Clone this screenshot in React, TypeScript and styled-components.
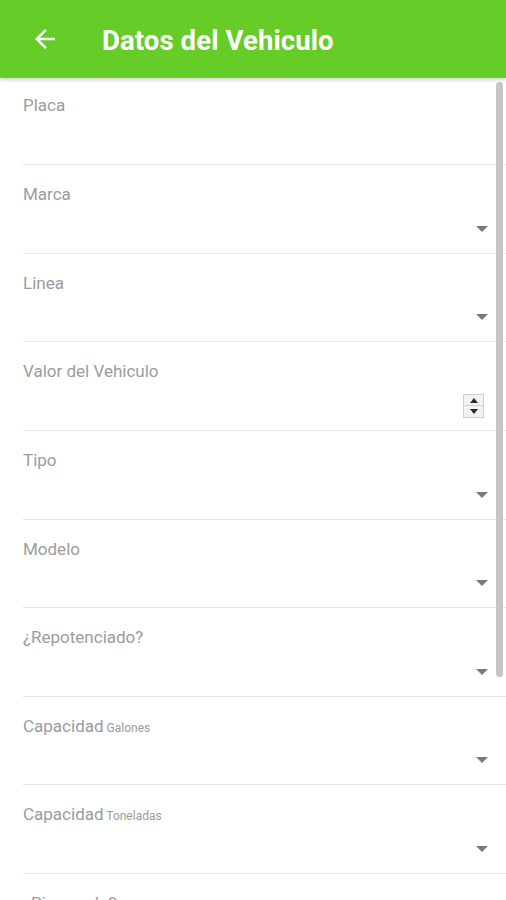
import styled, {createGlobalStyle} from 'styled-components';

const Global = createGlobalStyle`
  html, body {
    margin: 0;
    padding: 0;
    background: #ffffff;
    font-family: Roboto, 'Noto Sans', 'Liberation Sans', sans-serif;
  }
  * { box-sizing: border-box; }
`;

interface Field {
  label: string;
  unit?: string;
  kind: 'text' | 'select' | 'number';
}

const fields: Field[] = [
  {label: 'Placa', kind: 'text'},
  {label: 'Marca', kind: 'select'},
  {label: 'Linea', kind: 'select'},
  {label: 'Valor del Vehiculo', kind: 'number'},
  {label: 'Tipo', kind: 'select'},
  {label: 'Modelo', kind: 'select'},
  {label: '¿Repotenciado?', kind: 'select'},
  {label: 'Capacidad', unit: 'Galones', kind: 'select'},
  {label: 'Capacidad', unit: 'Toneladas', kind: 'select'},
  {label: '¿Pignorado?', kind: 'select'},
];

const App = () => {
  return (
    <Page>
      <Global />
      <Header>
        <BackButton aria-label="Volver">
          <svg width="30" height="30" viewBox="0 0 24 24">
            <path
              d="M20 11H7.83l5.59-5.59L12 4l-8 8 8 8 1.41-1.41L7.83 13H20v-2z"
              fill="#ffffff"
            />
          </svg>
        </BackButton>
        <Title>Datos del Vehiculo</Title>
      </Header>
      <Form>
        {fields.map((f, i) => (
          <Row key={i} $first={i == 0}>
            <Label>
              {f.label}
              {f.unit && <Unit> {f.unit}</Unit>}
            </Label>
            <Control>
              {f.kind == 'select' && <Caret />}
              {f.kind == 'number' && (
                <Spinner>
                  <SpinHalf>
                    <UpArrow />
                  </SpinHalf>
                  <SpinHalf>
                    <DownArrow />
                  </SpinHalf>
                </Spinner>
              )}
            </Control>
          </Row>
        ))}
        <Scrollbar />
      </Form>
    </Page>
  );
};

export default App;

const Page = styled.div`
  width: 506px;
  height: 900px;
  overflow: hidden;
  display: flex;
  flex-direction: column;
  background: #fff;
`;

const Header = styled.header`
  height: 78px;
  flex-shrink: 0;
  background: #66cc28;
  display: flex;
  align-items: center;
  padding-left: 30px;
  position: relative;
  z-index: 2;
  box-shadow: 0 2px 4px rgba(0, 0, 0, 0.18);
`;

const BackButton = styled.div`
  width: 30px;
  height: 30px;
  display: flex;
  align-items: center;
  justify-content: center;
  margin-right: 42px;
`;

const Title = styled.h1`
  margin: 0;
  color: #ffffff;
  font-size: 27.5px;
  font-weight: 700;
  letter-spacing: 0.1px;
  margin-top: 2px;
`;

const Form = styled.div`
  flex: 1;
  position: relative;
  overflow: hidden;
`;

const Row = styled.div<{$first: boolean}>`
  height: ${p => (p.$first ? '87px' : '88.625px')};
  margin-left: 23px;
  border-bottom: 1.5px solid #e6e6e6;
  padding-top: ${p => (p.$first ? '17px' : '19px')};
  display: flex;
  flex-direction: column;
`;

const Label = styled.div`
  font-size: 17px;
  line-height: 20px;
  color: #9c9c9c;
`;

const Unit = styled.span`
  font-size: 12px;
`;

const Control = styled.div`
  flex: 1;
  display: flex;
  align-items: flex-end;
  justify-content: flex-end;
  padding-right: 18px;
  padding-bottom: 21px;
`;

const Caret = styled.div`
  width: 0;
  height: 0;
  border-left: 6.5px solid transparent;
  border-right: 6.5px solid transparent;
  border-top: 6px solid #7a7a7a;
`;

const Spinner = styled.div`
  width: 21px;
  height: 24px;
  margin-right: 4px;
  margin-bottom: -9px;
  border: 1px solid #cfcfcf;
  background: #f2f2f2;
  display: flex;
  flex-direction: column;
`;

const SpinHalf = styled.div`
  flex: 1;
  display: flex;
  align-items: center;
  justify-content: center;
  & + & {
    border-top: 1px solid #d4d4d4;
  }
`;

const UpArrow = styled.div`
  width: 0;
  height: 0;
  border-left: 4px solid transparent;
  border-right: 4px solid transparent;
  border-bottom: 5px solid #2a2a2a;
`;

const DownArrow = styled.div`
  width: 0;
  height: 0;
  border-left: 4px solid transparent;
  border-right: 4px solid transparent;
  border-top: 5px solid #2a2a2a;
`;

const Scrollbar = styled.div`
  position: absolute;
  right: 3px;
  top: 4px;
  width: 7px;
  height: 595px;
  border-radius: 4px;
  background: #c6c6c6;
`;
